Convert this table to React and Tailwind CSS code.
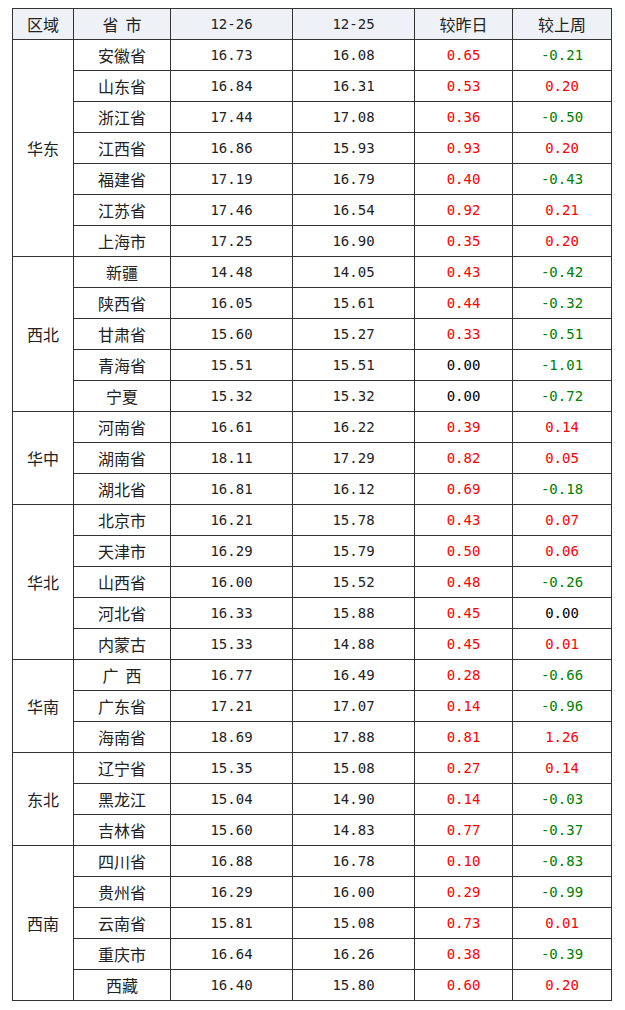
const regions = [
  ['华东', [
    ['安徽省', '16.73', '16.08', '0.65', '-0.21'],
    ['山东省', '16.84', '16.31', '0.53', '0.20'],
    ['浙江省', '17.44', '17.08', '0.36', '-0.50'],
    ['江西省', '16.86', '15.93', '0.93', '0.20'],
    ['福建省', '17.19', '16.79', '0.40', '-0.43'],
    ['江苏省', '17.46', '16.54', '0.92', '0.21'],
    ['上海市', '17.25', '16.90', '0.35', '0.20'],
  ]],
  ['西北', [
    ['新疆', '14.48', '14.05', '0.43', '-0.42'],
    ['陕西省', '16.05', '15.61', '0.44', '-0.32'],
    ['甘肃省', '15.60', '15.27', '0.33', '-0.51'],
    ['青海省', '15.51', '15.51', '0.00', '-1.01'],
    ['宁夏', '15.32', '15.32', '0.00', '-0.72'],
  ]],
  ['华中', [
    ['河南省', '16.61', '16.22', '0.39', '0.14'],
    ['湖南省', '18.11', '17.29', '0.82', '0.05'],
    ['湖北省', '16.81', '16.12', '0.69', '-0.18'],
  ]],
  ['华北', [
    ['北京市', '16.21', '15.78', '0.43', '0.07'],
    ['天津市', '16.29', '15.79', '0.50', '0.06'],
    ['山西省', '16.00', '15.52', '0.48', '-0.26'],
    ['河北省', '16.33', '15.88', '0.45', '0.00'],
    ['内蒙古', '15.33', '14.88', '0.45', '0.01'],
  ]],
  ['华南', [
    ['广\u00a0\u00a0西', '16.77', '16.49', '0.28', '-0.66'],
    ['广东省', '17.21', '17.07', '0.14', '-0.96'],
    ['海南省', '18.69', '17.88', '0.81', '1.26'],
  ]],
  ['东北', [
    ['辽宁省', '15.35', '15.08', '0.27', '0.14'],
    ['黑龙江', '15.04', '14.90', '0.14', '-0.03'],
    ['吉林省', '15.60', '14.83', '0.77', '-0.37'],
  ]],
  ['西南', [
    ['四川省', '16.88', '16.78', '0.10', '-0.83'],
    ['贵州省', '16.29', '16.00', '0.29', '-0.99'],
    ['云南省', '15.81', '15.08', '0.73', '0.01'],
    ['重庆市', '16.64', '16.26', '0.38', '-0.39'],
    ['西藏', '16.40', '15.80', '0.60', '0.20'],
  ]],
];

const cjk = "font-['Noto_Sans_CJK_SC',sans-serif] text-[16px]";
const mono = "font-['DejaVu_Sans_Mono','Noto_Sans_CJK_SC',monospace] text-[14px]";
const cell = 'border border-[#333] h-[31px] p-0 text-center align-middle leading-none';

function change(v) {
  const n = parseFloat(v);
  if (n > 0) return 'text-[#ff0000]';
  if (n < 0) return 'text-[#008000]';
  return 'text-black';
}

export default function App() {
  return (
    <div className="bg-white w-[625px] h-[1010px] pt-[8px] pl-[12px]">
      <table className="border-collapse table-fixed w-[599px] text-[#222]">
        <colgroup>
          <col className="w-[61px]" />
          <col className="w-[97px]" />
          <col className="w-[122px]" />
          <col className="w-[122px]" />
          <col className="w-[98px]" />
          <col className="w-[99px]" />
        </colgroup>
        <thead>
          <tr className="bg-[#eef2f6]">
            <th className={`${cell} ${cjk} font-normal`}>区域</th>
            <th className={`${cell} ${cjk} font-normal`}>省&nbsp;&nbsp;市</th>
            <th className={`${cell} ${mono} font-normal`}>12-26</th>
            <th className={`${cell} ${mono} font-normal`}>12-25</th>
            <th className={`${cell} ${cjk} font-normal`}>较昨日</th>
            <th className={`${cell} ${cjk} font-normal`}>较上周</th>
          </tr>
        </thead>
        <tbody>
          {regions.map(([name, rows]) =>
            rows.map((r, i) => (
              <tr key={name + i}>
                {i === 0 && (
                  <td rowSpan={rows.length} className={`${cell} ${cjk}`}>{name}</td>
                )}
                <td className={`${cell} ${cjk}`}>{r[0]}</td>
                <td className={`${cell} ${mono}`}>{r[1]}</td>
                <td className={`${cell} ${mono}`}>{r[2]}</td>
                <td className={`${cell} ${mono} ${change(r[3])}`}>{r[3]}</td>
                <td className={`${cell} ${mono} ${change(r[4])}`}>{r[4]}</td>
              </tr>
            ))
          )}
        </tbody>
      </table>
    </div>
  );
}
